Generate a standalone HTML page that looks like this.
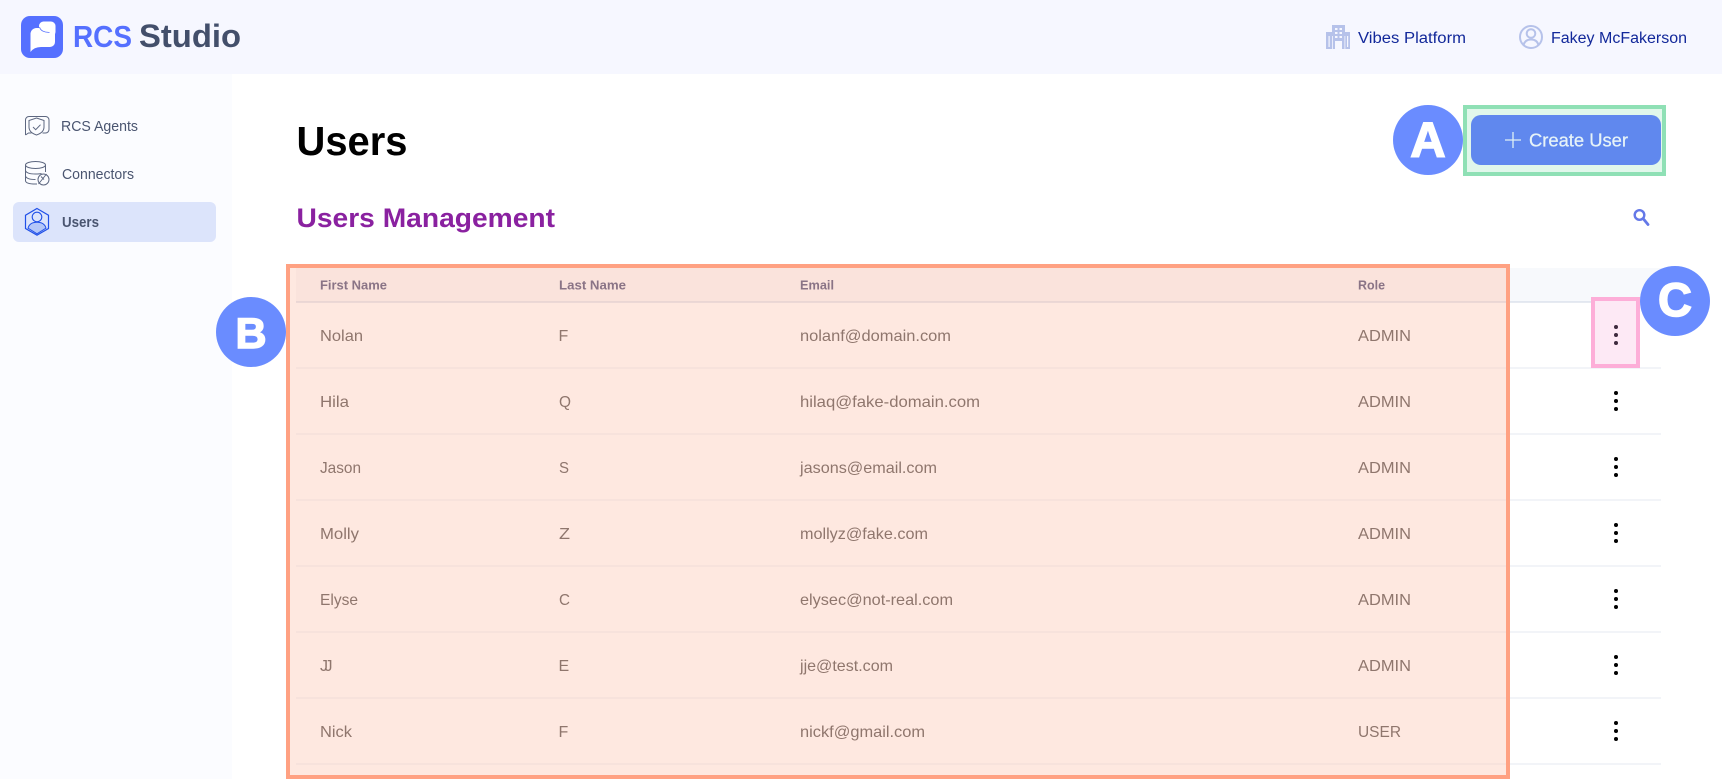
<!DOCTYPE html>
<html lang="en"><head><meta charset="utf-8"><title>RCS Studio - Users</title>
<style>
html,body{margin:0;padding:0;background:#fff;width:1722px;height:779px;overflow:hidden}
svg{display:block}
text{font-family:"Liberation Sans",sans-serif}
.r{font-size:16px;fill:#8f766d}
.h{font-size:13px;font-weight:700;fill:#8a7486}
.n{font-size:15px;fill:#4a5570}
.t{font-size:15.5px;fill:#12289a}
</style></head><body>
<svg width="1722" height="779" viewBox="0 0 1722 779" xmlns="http://www.w3.org/2000/svg">
<rect width="1722" height="779" fill="#fff"/>
<rect x="0" y="74" width="232" height="705" fill="#fbfcff"/>
<rect width="1722" height="74" fill="#f6f7ff"/>

<!-- logo -->
<rect x="21" y="16" width="42" height="42" rx="9" fill="#5570ff"/>
<path d="M30.500 52V34a6 6 0 0 1 6-6H50a5 5 0 0 1 5 5v9a5 5 0 0 1-5 5H41Q34 47 30.500 52Z" fill="#fff"/>
<rect x="39" y="21.500" width="16.500" height="15" rx="4.500" fill="#fff"/>
<path d="M39.500 27q1 4 6 5l4 .5" fill="none" stroke="#5570ff" stroke-width=".8"/>
<text x="73" y="47" font-size="31" font-weight="700" fill="#5570ff" textLength="59" lengthAdjust="spacingAndGlyphs">RCS</text>
<text x="139" y="47" font-size="32" font-weight="700" fill="#434f6b" textLength="102" lengthAdjust="spacingAndGlyphs">Studio</text>

<!-- top right -->
<g fill="#b6c2ea">
<path d="M1332 25h13v24h-3v-8h-7v8h-3z"/>
<path d="M1326 32h6v17h-6z"/><path d="M1345 32h5v17h-5z"/>
</g>
<g fill="#f6f7ff"><rect x="1335" y="28" width="2.500" height="2"/><rect x="1339.500" y="28" width="2.500" height="2"/><rect x="1335" y="32" width="2.500" height="2"/><rect x="1339.500" y="32" width="2.500" height="2"/><rect x="1335" y="36" width="2.500" height="2"/><rect x="1339.500" y="36" width="2.500" height="2"/><rect x="1328.500" y="36" width="1.200" height="11"/><rect x="1347" y="36" width="1.200" height="11"/><rect x="1332" y="36" width=".8" height="13"/><rect x="1344.500" y="36" width=".8" height="13"/></g>
<text class="t" x="1358" y="43" textLength="108" lengthAdjust="spacingAndGlyphs">Vibes Platform</text>
<g fill="none" stroke="#b6c2ea" stroke-width="2"><circle cx="1531" cy="37" r="11"/><circle cx="1531" cy="33.500" r="4.300"/><path d="M1523.500 45q1.500-5.500 7.500-5.500t7.500 5.500"/></g>
<text class="t" x="1551" y="43" textLength="136" lengthAdjust="spacingAndGlyphs">Fakey McFakerson</text>

<!-- sidebar -->
<rect x="13" y="202" width="203" height="40" rx="6" fill="#dce4fb"/>
<g fill="none" stroke="#5d6780" stroke-width="1">
<path d="M25.500 135V120a3.500 3.500 0 0 1 3.500-3.500h16.500a3.500 3.500 0 0 1 3.500 3.500v9.500a3.500 3.500 0 0 1-3.500 3.500h-3"/><path d="M25.500 135l3-2h3"/>
<path d="M36.500 118l7.500 2.500v6.500q0 5.500-7.500 8-7.500-2.500-7.500-8v-6.500z" fill="#fbfcff"/><path d="M33 127l2.700 2.700 4.800-5"/>
<ellipse cx="35.500" cy="165" rx="10" ry="3.500"/><path d="M25.500 165v15.500q0 3.500 10 3.500h1.500"/><path d="M45.500 165v7"/><path d="M25.500 170.500q1 3.500 10 3.500 4 0 6-.5"/><path d="M25.500 176q1 3.500 10 3.500"/>
<circle cx="43.500" cy="179.500" r="5.500" fill="#fbfcff"/><path d="M38.500 184l4-5 4-5M41 176.500l3 3"/>
</g>
<path d="M37 208.500l11.500 6.700v13.300L37 235.200l-11.500-6.700V215.200z" fill="none" stroke="#2050e8" stroke-width="1.200"/>
<path d="M28 228.200q1.500-6 9-6t9 6L37 233.800z" fill="#b4c7f8" stroke="#2050e8" stroke-width="1"/>
<circle cx="37" cy="217" r="4.800" fill="#dce4fb" stroke="#2050e8" stroke-width="1.100"/>
<text class="n" x="61" y="131" textLength="77" lengthAdjust="spacingAndGlyphs">RCS Agents</text>
<text class="n" x="62" y="179" textLength="72" lengthAdjust="spacingAndGlyphs">Connectors</text>
<text class="n" x="62" y="227" font-weight="700" textLength="37" lengthAdjust="spacingAndGlyphs">Users</text>

<!-- headings -->
<text x="296.500" y="155" font-size="41" font-weight="700" fill="#000" textLength="111" lengthAdjust="spacingAndGlyphs">Users</text>
<text x="296.500" y="227" font-size="27" font-weight="700" fill="#8a21a0" textLength="258.500" lengthAdjust="spacingAndGlyphs">Users Management</text>

<!-- create user -->
<rect x="1465" y="107" width="199" height="67" fill="#e1f7eb" stroke="#8fe0b5" stroke-width="4"/>
<rect x="1471" y="115" width="190" height="50" rx="10" fill="#6088ee"/>
<path d="M1513 132v16M1505 140h16" stroke="#dff0f5" stroke-width="1.300" fill="none"/>
<text x="1529" y="146.500" font-size="18" fill="#e6f3f8" stroke="#e6f3f8" stroke-width=".25" textLength="99" lengthAdjust="spacingAndGlyphs">Create User</text>

<!-- search -->
<circle cx="1639.500" cy="215" r="4.800" fill="none" stroke="#6478e8" stroke-width="2.400"/>
<path d="M1643.500 219l4.500 5.500" stroke="#6478e8" stroke-width="2.800" fill="none" stroke-linecap="round"/>

<!-- table background -->
<rect x="1510" y="268" width="151" height="34" fill="#f7f9fc"/>
<g fill="#cdd5e3"><rect x="1510" y="301.500" width="151" height="1"/></g>
<g fill="#e5e8f0"><rect x="1510" y="367.500" width="151" height="1"/><rect x="1510" y="433.500" width="151" height="1"/><rect x="1510" y="499.500" width="151" height="1"/><rect x="1510" y="565.500" width="151" height="1"/><rect x="1510" y="631.500" width="151" height="1"/><rect x="1510" y="697.500" width="151" height="1"/><rect x="1510" y="763.500" width="151" height="1"/></g>

<!-- B overlay -->
<rect x="288" y="266" width="1220" height="511" fill="#fee8e0" stroke="#ffa182" stroke-width="4"/>
<rect x="296" y="268" width="1210" height="34" fill="#fae3dc"/>
<rect x="296" y="301.500" width="1210" height="1" fill="#dac8cc"/>
<g fill="#f0dcd9"><rect x="296" y="367.500" width="1210" height="1"/><rect x="296" y="433.500" width="1210" height="1"/><rect x="296" y="499.500" width="1210" height="1"/><rect x="296" y="565.500" width="1210" height="1"/><rect x="296" y="631.500" width="1210" height="1"/><rect x="296" y="697.500" width="1210" height="1"/><rect x="296" y="763.500" width="1210" height="1"/></g>

<text class="h" x="320" y="289.500" textLength="67" lengthAdjust="spacingAndGlyphs">First Name</text>
<text class="h" x="559" y="289.500" textLength="67" lengthAdjust="spacingAndGlyphs">Last Name</text>
<text class="h" x="800" y="289.500" textLength="34" lengthAdjust="spacingAndGlyphs">Email</text>
<text class="h" x="1358" y="289.500" textLength="27" lengthAdjust="spacingAndGlyphs">Role</text>

<text class="r" x="320" y="341" textLength="43" lengthAdjust="spacingAndGlyphs">Nolan</text>
<text class="r" x="558.500" y="341">F</text>
<text class="r" x="800" y="341" textLength="151" lengthAdjust="spacingAndGlyphs">nolanf@domain.com</text>
<text class="r" x="1358" y="341" textLength="53" lengthAdjust="spacingAndGlyphs">ADMIN</text>

<text class="r" x="320" y="407" textLength="29" lengthAdjust="spacingAndGlyphs">Hila</text>
<text class="r" x="559" y="407" textLength="12" lengthAdjust="spacingAndGlyphs">Q</text>
<text class="r" x="800" y="407" textLength="180" lengthAdjust="spacingAndGlyphs">hilaq@fake-domain.com</text>
<text class="r" x="1358" y="407" textLength="53" lengthAdjust="spacingAndGlyphs">ADMIN</text>

<text class="r" x="320" y="473" textLength="41" lengthAdjust="spacingAndGlyphs">Jason</text>
<text class="r" x="559" y="473" textLength="10" lengthAdjust="spacingAndGlyphs">S</text>
<text class="r" x="800" y="473" textLength="137" lengthAdjust="spacingAndGlyphs">jasons@email.com</text>
<text class="r" x="1358" y="473" textLength="53" lengthAdjust="spacingAndGlyphs">ADMIN</text>

<text class="r" x="320" y="539" textLength="39" lengthAdjust="spacingAndGlyphs">Molly</text>
<text class="r" x="559" y="539" textLength="11" lengthAdjust="spacingAndGlyphs">Z</text>
<text class="r" x="800" y="539" textLength="128" lengthAdjust="spacingAndGlyphs">mollyz@fake.com</text>
<text class="r" x="1358" y="539" textLength="53" lengthAdjust="spacingAndGlyphs">ADMIN</text>

<text class="r" x="320" y="605" textLength="38" lengthAdjust="spacingAndGlyphs">Elyse</text>
<text class="r" x="559" y="605" textLength="11" lengthAdjust="spacingAndGlyphs">C</text>
<text class="r" x="800" y="605" textLength="153" lengthAdjust="spacingAndGlyphs">elysec@not-real.com</text>
<text class="r" x="1358" y="605" textLength="53" lengthAdjust="spacingAndGlyphs">ADMIN</text>

<text class="r" x="320" y="671" letter-spacing="-3.500">JJ</text>
<text class="r" x="558.500" y="671">E</text>
<text class="r" x="800" y="671" textLength="93" lengthAdjust="spacingAndGlyphs">jje@test.com</text>
<text class="r" x="1358" y="671" textLength="53" lengthAdjust="spacingAndGlyphs">ADMIN</text>

<text class="r" x="320" y="737" textLength="32" lengthAdjust="spacingAndGlyphs">Nick</text>
<text class="r" x="558.500" y="737">F</text>
<text class="r" x="800" y="737" textLength="125" lengthAdjust="spacingAndGlyphs">nickf@gmail.com</text>
<text class="r" x="1358" y="737" textLength="43" lengthAdjust="spacingAndGlyphs">USER</text>

<!-- C overlay -->
<rect x="1593" y="299" width="45" height="67" fill="#fde9f5" stroke="#fdaed8" stroke-width="4"/>
<g fill="#3d2a3d"><circle cx="1616" cy="327" r="2"/><circle cx="1616" cy="335" r="2"/><circle cx="1616" cy="343" r="2"/></g>
<g fill="#000">
<circle cx="1616" cy="393" r="2"/><circle cx="1616" cy="401" r="2"/><circle cx="1616" cy="409" r="2"/>
<circle cx="1616" cy="459" r="2"/><circle cx="1616" cy="467" r="2"/><circle cx="1616" cy="475" r="2"/>
<circle cx="1616" cy="525" r="2"/><circle cx="1616" cy="533" r="2"/><circle cx="1616" cy="541" r="2"/>
<circle cx="1616" cy="591" r="2"/><circle cx="1616" cy="599" r="2"/><circle cx="1616" cy="607" r="2"/>
<circle cx="1616" cy="657" r="2"/><circle cx="1616" cy="665" r="2"/><circle cx="1616" cy="673" r="2"/>
<circle cx="1616" cy="723" r="2"/><circle cx="1616" cy="731" r="2"/><circle cx="1616" cy="739" r="2"/>
</g>

<!-- badges -->
<circle cx="1428" cy="140" r="35" fill="#6a8cff"/>
<text x="1428" y="156.500" font-size="49" font-weight="700" fill="#fff" stroke="#fff" stroke-width="1.500" text-anchor="middle">A</text>
<circle cx="251" cy="332" r="35" fill="#6a8cff"/>
<text x="251" y="348" font-size="43" font-weight="700" fill="#fff" stroke="#fff" stroke-width="1.500" text-anchor="middle">B</text>
<circle cx="1675" cy="301" r="35" fill="#6a8cff"/>
<text x="1675" y="316" font-size="47" font-weight="700" fill="#fff" stroke="#fff" stroke-width="1.500" text-anchor="middle">C</text>
</svg>
</body></html>
